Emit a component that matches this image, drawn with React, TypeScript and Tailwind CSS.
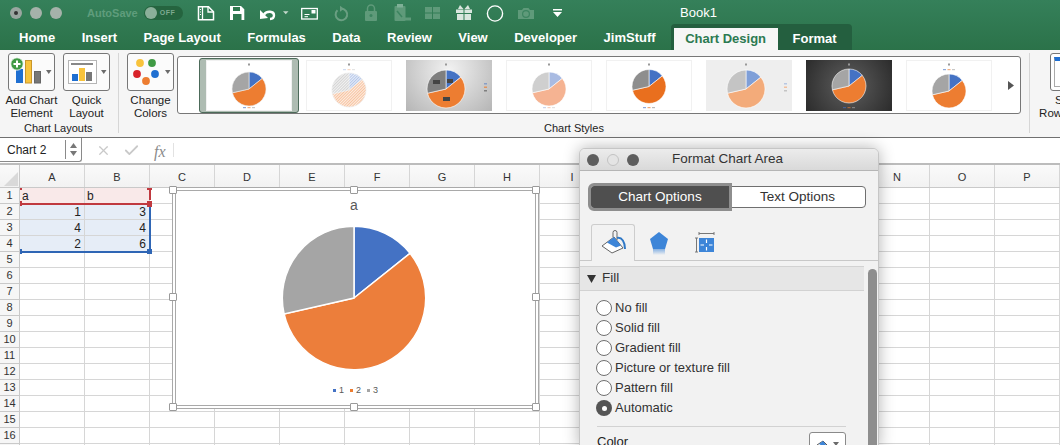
import React from 'react';
import { Check, X } from 'lucide-react';

const font = '[font-family:"Liberation_Sans",Arial,sans-serif]';
const COLUMNS = ['A', 'B', 'C', 'D', 'E', 'F', 'G', 'H', 'I', 'J', 'K', 'L', 'M', 'N', 'O', 'P'];
const ROWS = Array.from({ length: 17 }, (_, i) => i + 1);
const TABS = ['Home', 'Insert', 'Page Layout', 'Formulas', 'Data', 'Review', 'View', 'Developer', 'JimStuff'];
const FILL_OPTIONS = ['No fill', 'Solid fill', 'Gradient fill', 'Picture or texture fill', 'Pattern fill', 'Automatic'];

const CELLS: Record<string, string> = { A1: 'a', B1: 'b', A2: '1', B2: '3', A3: '4', B3: '4', A4: '2', B4: '6' };

// slices of the sample data: 1, 4, 2
function slicePaths(cx: number, cy: number, r: number) {
  const values = [1, 4, 2];
  const total = 7;
  let angle = -Math.PI / 2;
  return values.map((v) => {
    const next = angle + (v / total) * Math.PI * 2;
    const large = next - angle > Math.PI ? 1 : 0;
    const d = `M${cx} ${cy}L${cx + r * Math.cos(angle)} ${cy + r * Math.sin(angle)}A${r} ${r} 0 ${large} 1 ${cx + r * Math.cos(next)} ${cy + r * Math.sin(next)}Z`;
    angle = next;
    return d;
  });
}

interface ThumbProps {
  id: string;
  cy: number;
  r: number;
  colors: string[];
  bg?: string;
  stroke?: string;
  legendY?: number;
  offset?: number;
  side?: boolean;
  labels?: boolean;
  hatch?: boolean;
}

const Thumb: React.FC<ThumbProps> = ({
  id,
  cy,
  r,
  colors,
  bg = 'bg-white outline-1 -outline-offset-1 outline-[#f1f1f1]',
  stroke = '#fff',
  legendY = 47,
  offset = 0,
  side,
  labels,
  hatch,
}) => {
  const cx = 43 + offset;
  const paths = slicePaths(cx, cy, r);
  return (
    <div className={`h-[51px] w-[86px] shrink-0 ${bg}`}>
      <svg width={86} height={51} viewBox="0 0 86 51">
        <defs>
          <pattern id={id} width="2" height="2" patternUnits="userSpaceOnUse" patternTransform="rotate(45)">
            <rect width="1" height="2" fill="#fff" opacity="0.7" />
          </pattern>
        </defs>
        <rect x={cx - 1} y={3.5} width={2} height={2} fill="#999" />
        {paths.map((d, i) => (
          <path key={i} d={d} fill={colors[i]} stroke={stroke} strokeWidth={0.6} />
        ))}
        {hatch && paths.map((d, i) => <path key={i} d={d} fill={`url(#${id})`} />)}
        {labels && (
          <>
            <rect x={cx + 1} y={cy - 10} width={6} height={4} fill="#444" />
            <rect x={cx - 13} y={cy - 9} width={7} height={4} fill="#444" />
            <rect x={cx - 3} y={cy + 8} width={7} height={4} fill="#444" />
          </>
        )}
        {side ? (
          <g>
            <rect x={78} y={23} width={3} height={1.5} fill={colors[0]} opacity={0.5} />
            <rect x={78} y={26.5} width={3} height={1.5} fill={colors[1]} opacity={0.7} />
            <rect x={78} y={30} width={3} height={1.5} fill={colors[2]} />
          </g>
        ) : (
          <g opacity={0.6}>
            <rect x={37} y={legendY} width={3} height={1.2} fill={colors[0]} />
            <rect x={41.5} y={legendY} width={3} height={1.2} fill={colors[1]} />
            <rect x={46} y={legendY} width={3} height={1.2} fill={colors[2]} />
          </g>
        )}
      </svg>
    </div>
  );
};

const RibbonButton: React.FC<{ label: React.ReactNode; children: React.ReactNode }> = ({ label, children }) => (
  <div className="flex w-[47px] flex-col items-center">
    <div className="h-[38px] w-[47px] rounded-[3px] border border-[#777] bg-[#fbfbfb]">{children}</div>
    <div className="mt-[3px] whitespace-nowrap text-center text-[11.500px] leading-[12.5px] text-[#222]">{label}</div>
  </div>
);

const Caret = () => <path d="M37 16h5.500l-2.750 4z" fill="#6b6b6b" />;

const App: React.FC = () => {
  const main = slicePaths(100, 100, 71.7);
  return (
    <div className={`relative h-[445px] w-[1060px] overflow-hidden bg-white ${font}`}>
      <div className="bg-[linear-gradient(#35805a,#2b7249)]">
        {/* Title bar */}
        <div className="relative flex h-[26px] items-center">
          <div className="ml-[10px] flex items-center gap-[8px]">
            <div className="flex h-[12px] w-[12px] items-center justify-center rounded-full bg-[#9aa6a0]">
              <div className="h-[4px] w-[4px] rounded-full bg-[#333]" />
            </div>
            <div className="h-[12px] w-[12px] rounded-full bg-[#a5b2aa]" />
            <div className="h-[12px] w-[12px] rounded-full bg-[#a5b2aa]" />
          </div>
          <div className="ml-[25px] text-[11px] font-bold text-[#5f9d7c]">AutoSave</div>
          <div className="ml-[6px] flex h-[14px] w-[39px] items-center gap-[3px] rounded-full bg-[#25643f] pl-[1px]">
            <div className="h-[12px] w-[12px] rounded-full bg-[#8bb09a]" />
            <span className="text-[7px] font-bold tracking-[0.5px] text-[#7eaa90]">OFF</span>
          </div>
          <svg width="380" height="26" viewBox="0 0 380 26" className="ml-[8px] shrink-0">
            {/* book */}
            <path d="M7.500 6.800h10l5 5v8h-15z" fill="none" stroke="#fff" strokeWidth="1.500" />
            <path d="M11.500 7v12.500M17 7v5h5.500" fill="none" stroke="#fff" strokeWidth="1.300" />
            <path d="M9 9.500h1M9 12h1M9 14.500h1" stroke="#fff" strokeWidth="1" />
            {/* save */}
            <path d="M39 6h11l3.300 3.300V20H39z" fill="#fff" />
            <rect x="42" y="7" width="7" height="4" fill="#2f7a50" />
            <rect x="42" y="14" width="8.500" height="6" fill="#2f7a50" />
            {/* undo */}
            <path d="M69 10l0 9 8-1z" fill="#fff" />
            <path d="M73 14.500C76 10.500 83 11 83 15.300 83 17.500 81.500 19 79 19" fill="none" stroke="#fff" strokeWidth="2.400" />
            <path d="M92 11.200h5.500l-2.750 3z" fill="#c4d8cc" />
            {/* card */}
            <rect x="110.700" y="8.500" width="15.600" height="10.500" fill="none" stroke="#fff" strokeWidth="1.300" />
            <path d="M113.500 14.500h5M113.500 16.700h3.500" stroke="#fff" strokeWidth="1" />
            <rect x="120.500" y="10" width="4" height="3.500" fill="#fff" />
            {/* redo */}
            <path d="M146.500 10.200a5.800 5.800 0 1 0 4-1.500" fill="none" stroke="#6a9f82" strokeWidth="2" />
            <path d="M149 5.800l4 3-4 3z" fill="#6a9f82" />
            {/* lock */}
            <rect x="174" y="11" width="12" height="10" rx="1" fill="#5f9a7a" />
            <path d="M176.500 11V8.500a3.500 3.500 0 0 1 7 0V11" fill="none" stroke="#5f9a7a" strokeWidth="1.500" />
            <circle cx="180" cy="15.500" r="1.500" fill="#3c8460" />
            {/* clipboard */}
            <rect x="203.500" y="6" width="11" height="15" rx="1" fill="#5f9a7a" />
            <rect x="206" y="4" width="6" height="3.500" fill="#7fb097" />
            <path d="M206 11l5 6" stroke="#3c8460" strokeWidth="1.500" />
            <path d="M214 17.500h6v3h-6z" fill="#5f9a7a" />
            {/* grid */}
            <path d="M234 7h7v5.500h-7zM242 7h7v5.500h-7zM234 13.500h7V19h-7zM242 13.500h7V19h-7z" fill="#5f9a7a" />
            {/* gift */}
            <path d="M265 9.500h7.500V13H265zM273.500 9.500h7.500V13h-7.500zM266 14h6.500v6H266zM273.500 14h6.500v6h-6.500z" fill="#d9e6de" />
            <path d="M267 9l2-4 3.500 4zM279 9l-2-4-3.500 4z" fill="#d9e6de" />
            {/* circle */}
            <circle cx="304" cy="13.500" r="7.600" fill="none" stroke="#fff" strokeWidth="1.400" />
            {/* camera */}
            <path d="M327 10h4l1.500-2h5l1.500 2h4v9h-16z" fill="#5f9a7a" />
            <circle cx="335" cy="14" r="3.400" fill="none" stroke="#3c8460" strokeWidth="1.200" />
            {/* customize */}
            <path d="M362 9h9v1.600h-9zM362 12h9l-4.500 5z" fill="#fff" />
          </svg>
          <div className="absolute left-[680px] top-[5px] text-[13px] leading-[16px] text-white">Book1</div>
        </div>

        {/* Tab row */}
        <div className="flex h-[24px] items-end pl-[19px]">
          <div className="flex h-[24px] items-center gap-[26.500px] text-[13px] font-bold text-white">
            {TABS.map((t) => (
              <span key={t}>{t}</span>
            ))}
          </div>
          <div className="ml-[15px] flex h-[26px] w-[181px] shrink-0 items-end rounded-t-[4px] bg-[#245f3f] pl-[3px]">
            <div className="flex h-[22px] w-[104px] items-center justify-center bg-[#f6f6f6] text-[13px] font-bold text-[#2c7a51]">
              Chart Design
            </div>
            <div className="ml-[15px] flex h-[22px] items-center text-[13px] font-bold text-white">Format</div>
          </div>
        </div>
      </div>

      {/* Ribbon */}
      <div className="flex h-[88px] border-b border-[#707070] bg-[#f5f5f5]">
        <div className="relative flex w-[119px] shrink-0 flex-col pt-[3px]">
          <div className="flex gap-[8px] pl-[8px]">
            <RibbonButton label={<>Add Chart<br />Element</>}>
              <svg width="45" height="36" viewBox="0 0 45 36">
                <rect x="7" y="15" width="7" height="14" fill="#1f6fd1" />
                <rect x="16.500" y="6.500" width="6" height="22.500" fill="#f8c33c" stroke="#c9962a" />
                <rect x="25.500" y="17.500" width="6" height="11.500" fill="#777" stroke="#666" />
                <circle cx="8" cy="10" r="6.200" fill="#3f9a44" stroke="#fff" strokeWidth="0.800" />
                <path d="M8 6.500v7M4.500 10h7" stroke="#fff" strokeWidth="2" />
                <Caret />
              </svg>
            </RibbonButton>
            <RibbonButton label={<>Quick<br />Layout</>}>
              <svg width="45" height="36" viewBox="0 0 45 36">
                <rect x="4.500" y="6.500" width="28" height="23" fill="#fff" stroke="#b5b5b5" />
                <rect x="7" y="9" width="22" height="2" fill="#888" />
                <rect x="8" y="20" width="6" height="7" fill="#1f6fd1" />
                <rect x="15" y="14" width="6" height="13" fill="#f8c33c" />
                <rect x="22" y="18" width="6" height="9" fill="#777" />
                <Caret />
              </svg>
            </RibbonButton>
          </div>
          <div className="mt-auto pb-[2px] pl-[24px] text-[11px] leading-[14px] text-[#222]">Chart Layouts</div>
          <div className="absolute bottom-[4px] right-0 top-[3px] w-px bg-[#d6d6d6]" />
        </div>

        <div className="flex min-w-0 flex-1 flex-col pt-[3px]">
          <div className="flex">
            <div className="ml-[8px]">
              <RibbonButton label={<>Change<br />Colors</>}>
                <svg width="45" height="36" viewBox="0 0 45 36">
                  <circle cx="12" cy="9" r="3.900" fill="#f8c33c" />
                  <circle cx="24" cy="9" r="3.900" fill="#3f9a44" />
                  <circle cx="9" cy="20" r="3.900" fill="#d8232a" />
                  <circle cx="27" cy="20" r="3.900" fill="#1f6fd1" />
                  <circle cx="18" cy="27" r="3.900" fill="#ed7d31" />
                  <Caret />
                </svg>
              </RibbonButton>
            </div>
            {/* Gallery */}
            <div className="ml-[3px] mt-[3px] flex h-[58px] w-[844px] shrink-0 items-center rounded-[3px] border border-[#777] bg-white pl-[21px]">
              <div className="flex h-[55px] w-[100px] shrink-0 items-center justify-center rounded-[3px] border border-[#4d6b5a] bg-[#aebcb2]">
                <Thumb id="t1" cy={29} r={17} colors={['#4472c4', '#ed7d31', '#a5a5a5']} stroke="#eee" />
              </div>
              <div className="ml-[7px] flex gap-[14px]">
                <Thumb id="t2" cy={30} r={17} colors={['#b5c7ea', '#f7c3a0', '#d4d4d4']} stroke="#e8e8e8" legendY={9} hatch />
                <Thumb
                  id="t3"
                  cy={29}
                  r={19}
                  offset={-3}
                  colors={['#4472c4', '#ed7d31', '#7f7f7f']}
                  bg="bg-[radial-gradient(circle_at_50%_20%,#f2f2f2,#b5b5b5)]"
                  side
                  labels
                />
                <Thumb id="t4" cy={29} r={17} colors={['#a9bbe2', '#f5b392', '#cfcfcf']} />
                <Thumb id="t5" cy={26.500} r={17} colors={['#4472c4', '#e96f1e', '#8e8e8e']} />
                <Thumb
                  id="t6"
                  cy={29}
                  r={19}
                  offset={-3}
                  colors={['#7f9fd8', '#f3ab7a', '#c4c4c4']}
                  bg="bg-[#eeeeee]"
                  side
                />
                <Thumb
                  id="t7"
                  cy={26}
                  r={17}
                  colors={['#4472c4', '#ed7d31', '#a5a5a5']}
                  bg="bg-[radial-gradient(circle,#5f5f5f,#2b2b2b)]"
                />
                <Thumb id="t8" cy={31} r={17} colors={['#4472c4', '#ed7d31', '#a5a5a5']} legendY={9} />
              </div>
              <svg width="6" height="9" viewBox="0 0 6 9" className="ml-[16px] shrink-0">
                <path d="M0 0l6 4.500-6 4.500z" fill="#555" />
              </svg>
            </div>
          </div>
          <div className="mt-auto pb-[2px] pl-[425px] text-[11px] leading-[14px] text-[#222]">Chart Styles</div>
        </div>

        <div className="relative w-[31px] shrink-0 overflow-hidden pt-[3px]">
          <div className="absolute bottom-[4px] left-0 top-[3px] w-px bg-[#d6d6d6]" />
          <div className="ml-[21px] flex h-[38px] w-[46px] rounded-[3px] border border-[#777] bg-white p-[3px]">
            <div className="h-full w-full border border-[#aaa] border-t-[4px] border-t-[#1f6fd1]" />
          </div>
          <div className="ml-[8px] mt-[3px] w-[70px] whitespace-nowrap text-center text-[11.500px] leading-[12.500px] text-[#222]">
            Switch<br />Row/Column
          </div>
        </div>
      </div>

      {/* Formula bar */}
      <div className="flex h-[27px] items-start border-b-2 border-[#bcbcbc] bg-white">
        <div className="flex h-[24px] w-[82px] shrink-0 items-center justify-between rounded-br-[3px] border-b border-r border-[#8a8a8a] pl-[7px]">
          <span className="text-[12px] text-[#222]">Chart 2</span>
          <div className="flex h-[19px] w-[16px] flex-col items-center justify-center gap-[3px] border-l border-[#8a8a8a]">
            <svg width="7" height="5" viewBox="0 0 7 5"><path d="M3.500 0L7 5H0z" fill="#777" /></svg>
            <svg width="7" height="5" viewBox="0 0 7 5"><path d="M0 0h7L3.500 5z" fill="#777" /></svg>
          </div>
        </div>
        <X size={15} strokeWidth={2} className="ml-[14px] mt-[5px] text-[#c9c9c9]" />
        <Check size={17} strokeWidth={2.500} className="ml-[12px] mt-[4px] text-[#c9c9c9]" />
        <span className="ml-[14px] mt-[2px] text-[16px] italic text-[#8a8a8a] [font-family:'Liberation_Serif',serif]">fx</span>
        <div className="ml-[7px] mt-[5px] h-[14px] w-px bg-[#e2e2e2]" />
      </div>

      {/* Sheet */}
      <div className="relative">
        <div className="flex h-[23px] border-b border-[#c9c9c9] bg-[linear-gradient(#fafafa,#f2f2f2)]">
          <div className="relative w-[20px] shrink-0 border-r border-[#c9c9c9]">
            <div className="absolute bottom-[1px] right-[1px] h-0 w-0 border-b-[14px] border-l-[14px] border-b-[#d9d9d9] border-l-transparent" />
          </div>
          {COLUMNS.map((c) => (
            <div key={c} className="flex w-[65px] shrink-0 items-center justify-center border-r border-[#d6d6d6] pt-[2px] text-[11px] text-[#333]">
              {c}
            </div>
          ))}
        </div>
        {ROWS.map((r) => (
          <div key={r} className="flex h-[16px]">
            <div className="flex w-[20px] shrink-0 items-center justify-center border-b border-r border-[#c9c9c9] bg-[#f6f6f6] text-[11px] text-[#333]">
              {r < 17 ? r : ''}
            </div>
            {COLUMNS.map((c) => {
              const value = CELLS[`${c}${r}`];
              const tint = value ? (r === 1 ? 'bg-[#f9e9e9]' : 'bg-[#e6edf7]') : 'bg-white';
              return (
                <div
                  key={c}
                  className={`w-[65px] shrink-0 border-b border-r border-[#d6d6d6] text-[12px] leading-[16px] text-[#222] ${tint} ${r === 1 ? 'pl-[2px] text-left' : 'pr-[3px] text-right'}`}
                >
                  {value}
                </div>
              );
            })}
          </div>
        ))}

        {/* Range highlights */}
        <div className="absolute left-[20px] top-[23px] h-[2px] w-[2px] bg-[#c0393f]" />
        <div className="absolute left-[147px] top-[23px] h-[2px] w-[5px] bg-[#c0393f]" />
        <div className="absolute left-[149px] top-[25px] h-[10px] w-[2px] bg-[#c0393f]" />
        <div className="absolute left-[20px] top-[38px] h-[2px] w-[130px] bg-[#c0393f]" />
        <div className="absolute left-[20px] top-[36px] h-[5px] w-[2px] bg-[#c0393f]" />
        <div className="absolute left-[147px] top-[36px] h-[6px] w-[5px] bg-[#c0393f]" />
        <div className="absolute left-[149px] top-[42px] h-[43px] w-[2px] bg-[#2f66b5]" />
        <div className="absolute left-[20px] top-[86px] h-[2px] w-[128px] bg-[#2f66b5]" />
        <div className="absolute left-[20px] top-[84px] h-[5px] w-[2px] bg-[#2f66b5]" />
        <div className="absolute left-[147px] top-[84px] h-[5px] w-[5px] bg-[#2f66b5]" />

        {/* Chart object */}
        <div className="absolute left-[172px] top-[22px] h-[222px] w-[367px] border-[4px] border-double border-[#a9a9a9] bg-white">
          <div className="pr-[3px] pt-[7px] text-center text-[14px] leading-[14px] text-[#595959]">a</div>
          <svg width="200" height="200" viewBox="0 0 200 200" className="absolute left-[77.500px] top-[7px]">
            <path d={main[0]} fill="#4472c4" stroke="#fff" strokeWidth="1.500" />
            <path d={main[1]} fill="#ec7e3b" stroke="#fff" strokeWidth="1.500" />
            <path d={main[2]} fill="#a5a5a5" stroke="#fff" strokeWidth="1.500" />
          </svg>
          <div className="absolute bottom-[10px] left-0 right-0 flex items-center justify-center gap-[6px] text-[9px] leading-[10px] text-[#595959]">
            <span className="flex items-center gap-[3px]"><span className="h-[3px] w-[3px] bg-[#4472c4]" />1</span>
            <span className="flex items-center gap-[3px]"><span className="h-[3px] w-[3px] bg-[#ed7d31]" />2</span>
            <span className="flex items-center gap-[3px]"><span className="h-[3px] w-[3px] bg-[#a5a5a5]" />3</span>
          </div>
        </div>
        {[
          'left-[169px] top-[21px]', 'left-[350px] top-[21px]', 'left-[532px] top-[21px]',
          'left-[169px] top-[128px]', 'left-[532px] top-[128px]',
          'left-[169px] top-[238px]', 'left-[350px] top-[238px]', 'left-[532px] top-[238px]',
        ].map((pos) => (
          <div key={pos} className={`absolute h-[8px] w-[8px] rounded-[1px] border border-[#9a9a9a] bg-white ${pos}`} />
        ))}
      </div>

      {/* Format Chart Area pane */}
      <div className="absolute left-[579px] top-[148px] h-[300px] w-[300px] overflow-hidden rounded-t-[6px] border border-[#c6c6c6] bg-[#f2f2f2] shadow-[0_0_16px_rgba(0,0,0,0.3)]">
        <div className="relative flex h-[22px] items-center justify-center border-b border-[#b5b5b5] bg-[linear-gradient(#ececec,#d9d9d9)] pr-[3px] text-[13.500px] text-[#333]">
          <div className="absolute left-[7px] flex gap-[8px]">
            <div className="h-[12px] w-[12px] rounded-full bg-[#5e5e5e]" />
            <div className="h-[12px] w-[12px] rounded-full border border-[#c2c2c2] bg-[#e4e4e4]" />
            <div className="h-[12px] w-[12px] rounded-full bg-[#5e5e5e]" />
          </div>
          Format Chart Area
        </div>

        <div className="flex pl-[11px] pt-[15px]">
          <div className="relative z-10 flex h-[22px] w-[138px] items-center justify-center rounded-l-[3px] bg-[#4f4f4f] text-[13.500px] text-white outline-[3px] outline-[#8e8e8e]">
            Chart Options
          </div>
          <div className="flex h-[22px] w-[137px] items-center justify-center rounded-r-[4px] border border-[#6f6f6f] bg-white text-[13.500px] text-[#333]">
            Text Options
          </div>
        </div>

        <div className="mt-[16px] flex h-[37px] items-end border-b border-[#c8c8c8] pl-[11px]">
          <div className="-mb-px flex h-[37px] w-[44px] shrink-0 items-end justify-center rounded-t-[3px] border border-b-0 border-[#cdcdcd] bg-[#f2f2f2] pb-[6px]">
            <svg width="26" height="26" viewBox="0 0 26 26">
              <path d="M2 17l12-9 9 11-11 5z" fill="#fff" stroke="#666" />
              <path d="M7 13.500L14 8l7 8.500-5 2z" fill="#3d85d8" />
              <path d="M13 8V3.500a2 2 0 0 1 4 0V11" fill="none" stroke="#666" />
              <path d="M17 9C22 8 25 13 25 20" fill="none" stroke="#2f78c6" strokeWidth="2" />
            </svg>
          </div>
          <svg width="22" height="30" viewBox="0 0 22 30" className="mb-[1px] ml-[13px] shrink-0">
            <defs>
              <linearGradient id="pentagon-fade" x1="0" y1="0" x2="0" y2="1">
                <stop offset="0" stopColor="#3d85d8" stopOpacity="0.600" />
                <stop offset="1" stopColor="#3d85d8" stopOpacity="0" />
              </linearGradient>
            </defs>
            <path d="M11 3l9 7-3 10H5L2 10z" fill="#3d85d8" />
            <rect x="5" y="20" width="12" height="6" fill="url(#pentagon-fade)" />
          </svg>
          <svg width="22" height="30" viewBox="0 0 22 30" className="mb-[1px] ml-[24px] shrink-0">
            <path d="M5 4.500h15M5 3v3M20 3v3M1 9h3M2.500 9v14M1 23h3" stroke="#777" fill="none" />
            <rect x="5" y="9" width="15" height="14" fill="#3d85d8" />
            <path d="M12.500 10.500v3.500M12.500 18v3.500M6.500 16h3.500M15 16h3.500" stroke="#fff" strokeWidth="1.200" />
          </svg>
        </div>

        <div className="flex">
          <div className="w-[284px] shrink-0">
            <div className="mt-[5px] flex h-[25px] items-center gap-[6px] border-y border-[#d2d2d2] bg-[#e6e6e6] pl-[7px] text-[13.500px] text-[#333]">
              <svg width="9" height="8" viewBox="0 0 9 8"><path d="M0 0h9L4.500 8z" fill="#333" /></svg>
              Fill
            </div>
            <div className="flex flex-col pl-[16px] pt-[7px]">
              {FILL_OPTIONS.map((o) => (
                <div key={o} className="flex h-[20px] items-center gap-[3px] text-[13px] text-[#333]">
                  {o === 'Automatic' ? (
                    <div className="flex h-[16px] w-[16px] items-center justify-center rounded-full bg-[#555]">
                      <div className="h-[5px] w-[5px] rounded-full bg-white" />
                    </div>
                  ) : (
                    <div className="h-[16px] w-[16px] rounded-full border border-[#6f6f6f] bg-white" />
                  )}
                  {o}
                </div>
              ))}
            </div>
            <div className="ml-[17px] mt-[8px] w-[249px] border-t border-[#d2d2d2]" />
            <div className="flex items-start justify-between pl-[17px] pr-[18px] pt-[5px] text-[13px] leading-[14px] text-[#222]">
              <span className="pt-[3px]">Color</span>
              <div className="flex h-[24px] w-[37px] items-center justify-center gap-[3px] rounded-[3px] border border-[#8a8a8a] bg-white">
                <svg width="14" height="14" viewBox="0 0 14 14">
                  <path d="M1 8l6-4 5 5-6 4z" fill="#fff" stroke="#555" />
                  <path d="M3 7l4-3 4 5-3 1z" fill="#3d85d8" />
                </svg>
                <svg width="6" height="4" viewBox="0 0 6 4"><path d="M0 0h6L3 4z" fill="#6b6b6b" /></svg>
              </div>
            </div>
          </div>
          <div className="ml-[4px] mt-[8px] h-[200px] w-[9px] rounded-t-full bg-[#8e8e8e]" />
        </div>
      </div>
    </div>
  );
};

export default App;
